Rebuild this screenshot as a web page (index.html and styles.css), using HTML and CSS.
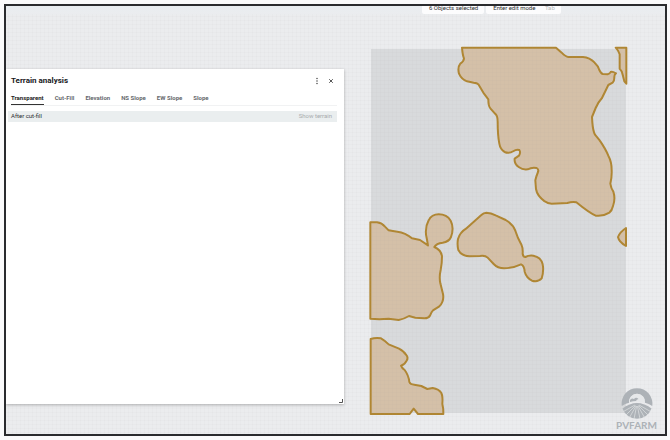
FILE: index.html
```html
<!DOCTYPE html>
<html lang="en">
<head>
<meta charset="utf-8">
<title>Terrain analysis</title>
<link rel="stylesheet" href="styles.css">
</head>
<body>
<main class="viewport">
  <svg class="map" viewBox="6 6 659 428" preserveAspectRatio="xMidYMid slice" role="img" aria-label="Site map">
    <defs>
      <pattern id="grid" width="4" height="4" patternUnits="userSpaceOnUse">
        <path d="M0 .5H4M.5 0V4" stroke="#8a9096" stroke-opacity=".04" fill="none"/>
      </pattern>
      <linearGradient id="sky" x1="0" y1="0" x2="0" y2="1">
        <stop offset="0" stop-color="#e9edf1"/>
        <stop offset="1" stop-color="#ebecee"/>
      </linearGradient>
    </defs>
    <rect x="6" y="6" width="660" height="428" fill="#ebecee"/>
    <rect x="6" y="6" width="660" height="10" fill="url(#sky)"/>
    <rect x="371" y="49" width="255" height="364" fill="#d8dadc"/>
    <g class="area">
      <g transform="translate(445 35) scale(.33333)">
        <path d="M51 38H333L350 53Q362 65 370 66H414Q434 67 449 83Q459 92 463 105Q468 116 474 117L488 118Q495 116 497 111Q502 109 513 115Q507 120 508 128Q508 138 503 143L490 150L471 189Q459 202 452 219L441 246L442 262Q444 288 450 299L464 316Q482 342 490 362Q500 380 500 405Q501 424 496 446Q498 460 505 470Q512 491 504 513Q501 527 493 533Q474 545 452 542Q433 534 394 502Q382 499 367 504L320 506Q308 506 299 499Q276 482 273 462L271 436Q274 423 279 411Q282 403 275 399Q261 396 248 403Q233 405 221 396Q207 386 209 371L222 362Q228 352 223 345Q214 342 206 348Q192 357 179 351Q166 344 163 326Q158 300 158 260Q158 241 150 236L136 220Q130 214 130 193L117 176L101 149Q96 143 86 143L66 139Q50 134 42 116Q37 97 46 86Q57 79 57 70Q53 62 51 38Z"/>
        <path d="M512 38H544V146L538 139L533 119Q530 106 524 101V58Q521 47 512 38Z"/>
      </g>
      <g transform="translate(360 200) scale(.33333)">
        <path d="M31 67H51Q66 69 75 80L86 91Q98 94 112 95Q136 98 156 115L180 120L204 136L200 114Q193 85 206 61Q215 43 236 43Q261 43 272 62Q283 83 273 111Q267 125 248 128Q229 130 223 141Q243 149 246 169Q246 190 242 210Q237 231 241 250L249 282Q253 304 238 319L219 331Q214 336 210 347Q204 356 192 355L166 353L147 348Q132 357 116 360L86 356L58 358L31 356Z"/>
        <path d="M379 38Q393 39 407 46L437 60Q459 73 466 92Q472 112 485 136Q489 144 488 161Q489 171 496 171Q507 165 520 167Q543 171 548 193Q552 213 545 235Q534 247 516 242Q499 233 494 215Q493 197 483 193Q460 204 432 205Q413 205 401 192L383 173Q376 166 360 168L328 169Q303 167 295 150Q291 134 294 117Q300 97 318 86L364 45Q371 38 379 38Z"/>
      </g>
      <g transform="translate(360 325) scale(.33333)">
        <path d="M32 42Q47 37 63 40Q75 47 86 58L117 71Q133 80 138 89Q146 98 140 107Q135 118 123 122Q126 130 134 135Q146 151 148 171Q151 179 163 179L184 183L202 192L218 189Q237 192 244 204Q249 215 247 237Q251 253 250 267H174L161 251L149 267H32Z"/>
      </g>
      <path d="M626 228V246Q619 242 618 237Q620 232 626 228Z"/>
    </g>
    <rect x="6" y="14" width="660" height="420" fill="url(#grid)"/>
  </svg>

  <div class="toolbar">
    <span class="chip">6 Objects selected</span>
    <button class="chip" type="button">Enter edit mode <kbd>Tab</kbd></button>
  </div>

  <section class="panel">
    <header class="panel-head">
      <h1>Terrain analysis</h1>
      <button class="icon" type="button" aria-label="More options">
        <svg viewBox="0 0 8 8"><circle cx="4" cy="1.5" r=".7"/><circle cx="4" cy="4" r=".7"/><circle cx="4" cy="6.5" r=".7"/></svg>
      </button>
      <button class="icon" type="button" aria-label="Close">
        <svg viewBox="0 0 8 8"><path d="M2.2 2.2 5.8 5.8M5.8 2.2 2.2 5.8" stroke="#444" stroke-width=".9"/></svg>
      </button>
    </header>
    <nav class="tabs">
      <button class="tab active" type="button">Transparent</button>
      <button class="tab" type="button">Cut-Fill</button>
      <button class="tab" type="button">Elevation</button>
      <button class="tab" type="button">NS Slope</button>
      <button class="tab" type="button">EW Slope</button>
      <button class="tab" type="button">Slope</button>
    </nav>
    <div class="row">
      <span>After cut-fill</span>
      <button class="show" type="button">Show terrain</button>
    </div>
    <svg class="grip" viewBox="0 0 4 4" aria-hidden="true"><path d="M3.5 0V3.5H0" fill="none" stroke="#555"/></svg>
  </section>

  <div class="brand">
    <svg viewBox="0 0 32 32" aria-hidden="true">
      <path d="M.8 19A15.4 15.4 0 1 1 31.2 19Q28 16.500 23.800 15.800A7.900 7.900 0 1 0 8.200 15.800Q4 16.500 .8 19Z"/>
      <path class="light" d="M8.200 16A7.900 7.900 0 1 1 23.800 16Q19 14.500 16 14.500Q12 14.500 8.200 16Z"/>
      <path d="M9 13Q10.500 10.500 13 12Q15 9.500 17.500 12Q15.500 12.500 15 14Q12 14 9 15Z"/>
      <path d="M1.500 21.500Q16 10.500 30.500 21.500A15.400 15.400 0 0 1 1.500 21.500Z"/>
      <path class="rays" d="M14 18 2.500 24.500M14.500 18.500 5 28M15 19 8.500 30.500M15.600 19 13 32M16.400 19 19 32M17 19 23.500 30.500M17.500 18.500 27 28M18 18 29.500 24.500"/>
    </svg>
    <span>PVFARM</span>
  </div>
</main>
</body>
</html>
```
FILE: styles.css
```css
* { box-sizing: border-box; }
html, body { height: 100%; }
body {
  margin: 0;
  padding: 4px 3px 4px 4px;
  background: #fafafb;
  color: #2b2d30;
  font: 6px/8px Roboto, sans-serif;
}
button {
  border: 0;
  padding: 0;
  background: none;
  color: inherit;
  font: inherit;
}
.viewport {
  position: relative;
  height: 100%;
  overflow: hidden;
  border: 2px solid #2a2b2e;
}
.map {
  position: absolute;
  inset: 0;
  width: 100%;
  height: 100%;
}
.area path {
  fill: #d4c0a8;
  stroke: #b08632;
  stroke-width: 2px;
  stroke-linejoin: round;
  vector-effect: non-scaling-stroke;
}
.toolbar {
  position: absolute;
  top: -3px;
  left: 416px;
  display: flex;
  gap: 2px;
}
.chip {
  padding: 1px 6px 2px 7px;
  border-radius: 0 0 2px 2px;
  background: #fcfcfd;
}
.chip kbd {
  margin-left: 8px;
  color: #b4b7ba;
  font: inherit;
}
.panel {
  position: absolute;
  top: 63px;
  bottom: 30px;
  left: 0;
  width: 51.3%;
  padding: 6px 7px 0 0;
  background: #fff;
  box-shadow: 0 1px 3px rgba(0, 0, 0, .25);
}
.panel-head {
  display: flex;
  align-items: center;
  gap: 6px;
  padding: 0 2px 0 5px;
}
h1 {
  flex: 1;
  margin: 0;
  color: #17181a;
  font-size: 8px;
  line-height: 12px;
}
.icon {
  width: 8px;
  height: 8px;
}
.icon svg {
  display: block;
  fill: #333;
}
.tabs {
  display: flex;
  gap: 11px;
  margin: 7px 0 5px 5px;
  border-bottom: 1px solid #f1f2f3;
}
.tab {
  padding-bottom: 2px;
  border-bottom: 1px solid transparent;
  color: #66696d;
  font-weight: bold;
}
.tab.active {
  border-color: #333;
  color: #222;
}
.row {
  display: flex;
  justify-content: space-between;
  align-items: center;
  margin-left: 2px;
  padding: 1px 5px 2px 3px;
  background: #eaeeef;
}
.show { color: #a7abae; }
.grip {
  position: absolute;
  right: 1px;
  bottom: 1px;
  width: 4px;
  height: 4px;
}
.brand {
  position: absolute;
  right: 8px;
  bottom: 3px;
  display: flex;
  flex-direction: column;
  align-items: center;
  color: #adb2b7;
  font: bold 10px/12px Lato, sans-serif;
}
.brand svg {
  width: 32px;
  height: 32px;
  fill: #adb2b7;
}
.brand .light { fill: #e6e8ea; }
.brand .rays {
  fill: none;
  stroke: #e0e2e4;
  stroke-width: .7px;
}
```
